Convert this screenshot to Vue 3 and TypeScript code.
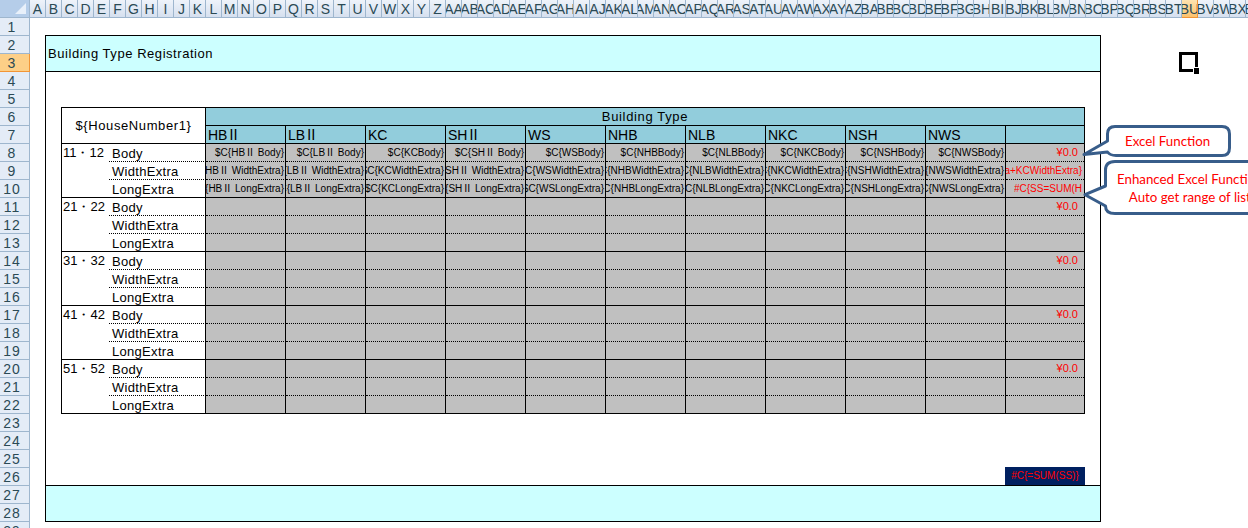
<script setup lang="ts">
interface BuildingType {
  base: string;
  roman: boolean;
}
const colName = (i: number): string =>
  i < 26 ? String.fromCharCode(65 + i) : colName(Math.floor(i / 26) - 1) + String.fromCharCode(65 + (i % 26));
const cols = Array.from({ length: 77 }, (_, i) => colName(i));
const rows = Array.from({ length: 29 }, (_, i) => i + 1);
const types: BuildingType[] = [
  { base: 'HB', roman: true },
  { base: 'LB', roman: true },
  { base: 'KC', roman: false },
  { base: 'SH', roman: true },
  { base: 'WS', roman: false },
  { base: 'NHB', roman: false },
  { base: 'NLB', roman: false },
  { base: 'NKC', roman: false },
  { base: 'NSH', roman: false },
  { base: 'NWS', roman: false },
];
const groups = ['11・12', '21・22', '31・32', '41・42', '51・52'];
const labels = ['Body', 'WidthExtra', 'LongExtra'];
</script>

<template>
  <div class="excel">
    <div class="corner"><span class="tri"></span></div>
    <div class="colheads">
      <div v-for="c in cols" :key="c" class="ch" :class="{ on: c === 'BU' }"><span>{{ c }}</span></div>
    </div>
    <div class="rowheads">
      <div v-for="r in rows" :key="r" class="rh" :class="{ on: r === 3 }">{{ r }}</div>
    </div>
    <div class="sheet">
      <div class="box">
        <div class="band top">Building Type Registration</div>
        <div class="mid">
          <div class="tbl">
            <div class="hn">${HouseNumber1}</div>
            <div class="bt">Building Type</div>
            <div v-for="t in types" :key="t.base" class="ty">{{ t.base }}<i v-if="t.roman" class="ro">Ⅱ</i></div>
            <div class="ty last"></div>
            <template v-for="(g, gi) in groups" :key="g">
              <template v-for="(l, li) in labels" :key="l">
                <div class="grp" :class="{ end: li === 2 }">{{ li === 0 ? g : '' }}</div>
                <div class="lab" :class="{ end: li === 2 }">{{ l }}</div>
                <div v-for="t in types" :key="t.base" class="cell" :class="{ end: li === 2 }">
                  <span v-if="gi === 0">{{ '$C{' + t.base }}<i v-if="t.roman" class="ro">Ⅱ</i>{{ (t.roman ? ' ' : '') + l + '}' }}</span>
                </div>
                <div class="cell red last" :class="{ end: li === 2, left: gi === 0 && li === 2 }">
                  <span v-if="li === 0" class="yen">¥0.0</span>
                  <span v-else-if="gi === 0 && li === 1">#C{SS=SUM(HBⅡ WidthExtra+KCWidthExtra}</span>
                  <span v-else-if="gi === 0" class="clip">#C{SS=SUM(HBⅡ LongExtra+KCLongExtra)}</span>
                </div>
              </template>
            </template>
          </div>
          <div class="total">#C{=SUM(SS)}</div>
        </div>
        <div class="band bottom"></div>
      </div>
      <div class="selected"><i></i></div>
      <svg class="callouts" width="170" height="100" viewBox="0 0 170 100">
        <path d="M37 8.5 H144 Q151.5 8.5 151.5 16 V30 Q151.5 37.5 144 37.5 H38 Q32 37.5 29.5 34 L6 36.5 L29.5 23 V16 Q29.5 8.5 37 8.5 Z" fill="#fff" stroke="#385D8A" stroke-width="3" stroke-linejoin="round" />
        <path d="M37 43.5 H190 V95.5 H37 Q27.5 95.5 27.5 88 L7 76.7 L27.5 68 V52 Q27.5 43.5 37 43.5 Z" fill="#fff" stroke="#385D8A" stroke-width="3" stroke-linejoin="round" />
      </svg>
      <div class="note one">Excel Function</div>
      <div class="note two">Enhanced Excel Function<br />Auto get range of list</div>
    </div>
  </div>
</template>

<style>
html, body { margin: 0; overflow: hidden; background: #fff; }
</style>

<style scoped>
.excel {
  width: 1248px;
  height: 528px;
  overflow: hidden;
  display: grid;
  grid-template-columns: 30px 1218px;
  grid-template-rows: 18px 510px;
  font-family: "Liberation Sans", Arial, sans-serif;
  color: #000;
}
.corner {
  background: #b5cde9;
  border-right: 1px solid #9eb6ce;
  border-bottom: 1px solid #9eb6ce;
  box-sizing: border-box;
  position: relative;
}
.tri {
  position: absolute;
  right: 3px;
  bottom: 3px;
  border-style: solid;
  border-width: 0 0 11px 11px;
  border-color: transparent transparent #e8f0fa transparent;
}
.colheads { display: flex; overflow: hidden; }
.ch {
  flex: 0 0 16px;
  height: 18px;
  box-sizing: border-box;
  border-right: 1px solid #9eb6ce;
  border-bottom: 1px solid #9eb6ce;
  background: linear-gradient(#eef3fa, #d6e0ef);
  color: #2b4a55;
  font-size: 14px;
  line-height: 19px;
  display: flex;
  justify-content: center;
  overflow: hidden;
}
.ch span { flex: none; }
.ch.on { background: linear-gradient(#fde3b0, #fbc26e); border-color: #f29536; }
.rowheads { display: flex; flex-direction: column; overflow: hidden; }
.rh {
  flex: 0 0 18px;
  height: 18px;
  overflow: hidden;
  box-sizing: border-box;
  border-right: 1px solid #9eb6ce;
  border-bottom: 1px solid #9eb6ce;
  background: #e4ecf7;
  color: #2b4a55;
  font-size: 14px;
  line-height: 18px;
  letter-spacing: 1px;
  text-align: center;
  padding-right: 5px;
}
.rh.on { background: #fdcf87; border-color: #f29536; }
.sheet { position: relative; background: #fff; overflow: hidden; }
.box {
  margin: 17px 0 0 15px;
  width: 1056px;
  height: 487px;
  box-sizing: border-box;
  border: 1px solid #000;
  display: flex;
  flex-direction: column;
}
.band { background: #ccffff; flex: none; box-sizing: border-box; }
.band.top {
  height: 36px;
  border-bottom: 1px solid #000;
  font-size: 13px;
  letter-spacing: 0.55px;
  line-height: 36px;
  padding-left: 2px;
}
.band.bottom { height: 36px; border-top: 1px solid #000; }
.mid {
  flex: 1;
  box-sizing: border-box;
  padding: 35px 15px 0;
  display: flex;
  flex-direction: column;
  justify-content: space-between;
}
.tbl {
  width: 1024px;
  box-sizing: border-box;
  border-top: 1px solid #000;
  border-left: 1px solid #000;
  border-right: 1px solid #000;
  display: grid;
  grid-template-columns: 47px 97px repeat(10, 80px) 78px;
  grid-auto-rows: 18px;
  font-size: 13px;
}
.ro {
  font-family: "Noto Sans CJK JP", sans-serif;
  font-style: normal;
  font-size: 10px;
  line-height: 1;
}
.ty .ro {
  font-size: 14px;
  margin: 0 -2px 0 -1px;
}
.hn {
  grid-row: span 2;
  grid-column: span 2;
  border-right: 1px solid #000;
  border-bottom: 1px solid #000;
  display: flex;
  align-items: center;
  justify-content: center;
  letter-spacing: 0.6px;
  font-size: 13px;
}
.bt {
  grid-column: span 11;
  background: #92cddc;
  border-bottom: 1px solid #000;
  text-align: center;
  line-height: 17px;
  letter-spacing: 0.65px;
}
.ty {
  background: #92cddc;
  border-right: 1px solid #000;
  border-bottom: 1px solid #000;
  font-size: 14px;
  line-height: 19px;
  padding-left: 2px;
  overflow: hidden;
}
.last { border-right: 0 !important; }
.grp {
  padding-left: 1px;
  line-height: 18px;
  white-space: nowrap;
}
.grp.end { border-bottom: 1px solid #000; }
.lab {
  border-right: 1px solid #000;
  border-bottom: 1px dotted #000;
  padding-left: 3px;
  line-height: 19px;
  letter-spacing: 0.3px;
}
.lab.end { border-bottom: 1px solid #000; }
.cell {
  background: #c0c0c0;
  border-right: 1px solid #000;
  border-bottom: 1px dotted #000;
  display: flex;
  justify-content: flex-end;
  align-items: center;
  overflow: hidden;
  font-size: 10px;
  white-space: nowrap;
  padding: 0 1px 1px 0;
}
.cell span { flex: none; }
.cell.end { border-bottom: 1px solid #000; }
.cell.red { color: #f00; padding-right: 2px; }
.cell.red .yen { font-size: 11px; margin-right: 4px; }
.cell.left { justify-content: flex-start; padding-left: 8px; padding-right: 0; }
.cell.left .clip { width: 68px; overflow: hidden; }
.total {
  align-self: flex-end;
  width: 80px;
  height: 18px;
  background: #002060;
  color: #f00;
  font-size: 10px;
  line-height: 18px;
  text-align: center;
}
.selected {
  position: absolute;
  left: 1149px;
  top: 34px;
  width: 19px;
  height: 20px;
  box-sizing: border-box;
  border: 3px solid #000;
}
.selected i {
  position: absolute;
  right: -4px;
  bottom: -5px;
  width: 5px;
  height: 6px;
  background: #000;
  box-shadow: -1px -1px 0 #fff;
}
.callouts { position: absolute; left: 1048px; top: 100px; overflow: visible; }
.note {
  position: absolute;
  color: #f00;
  font-family: Lato, "Liberation Sans", sans-serif;
  font-size: 13.3px;
  line-height: 18px;
  text-align: center;
  white-space: nowrap;
}
.note.one { left: 1095px; top: 114px; }
.note.two { left: 1087px; top: 152px; }
</style>
